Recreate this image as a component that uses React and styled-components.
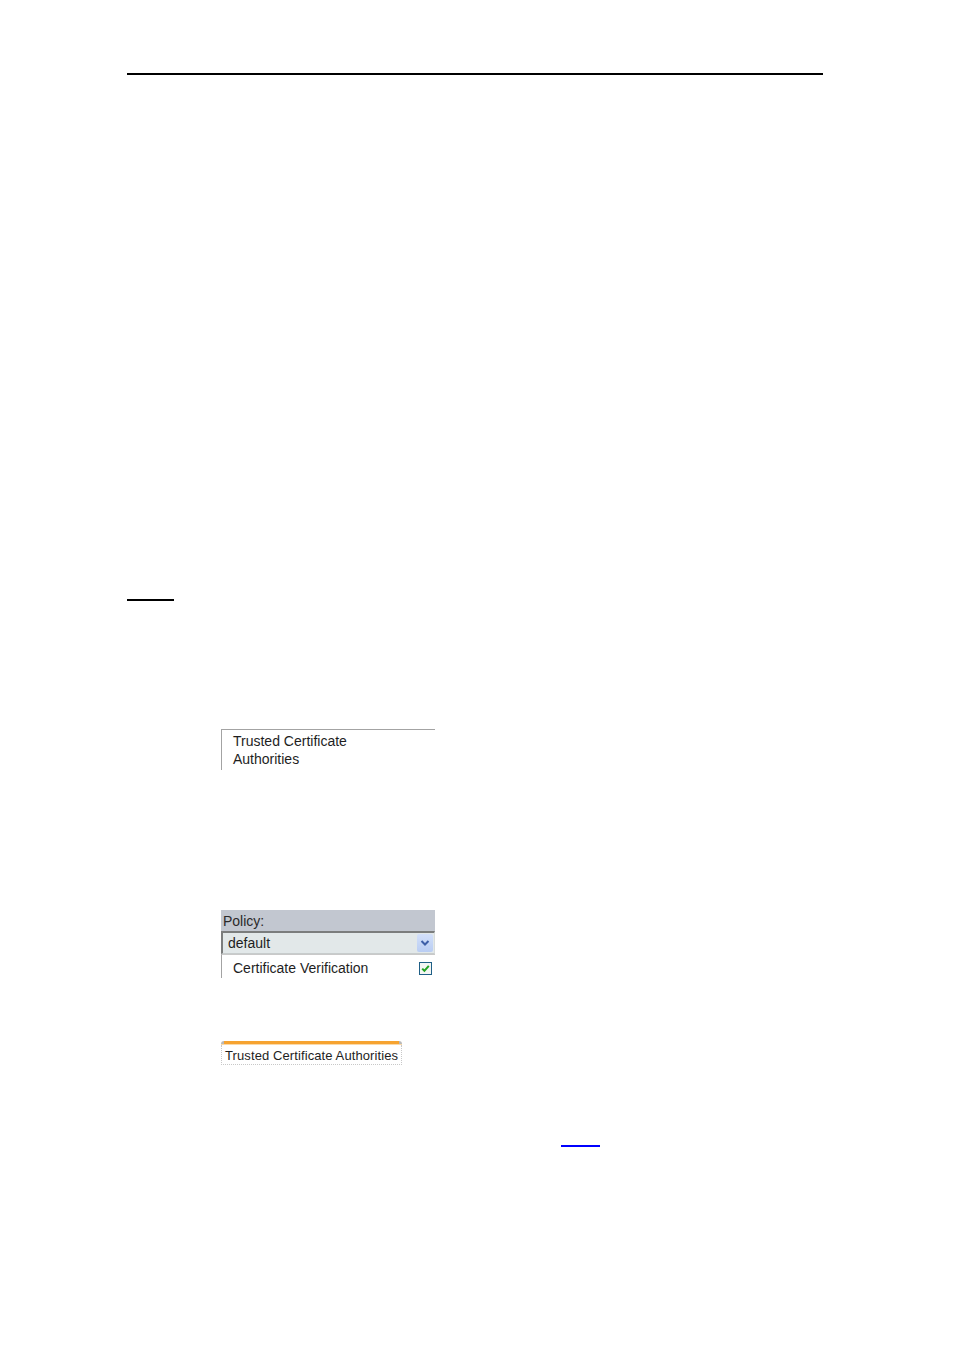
import React from 'react';
import styled, { createGlobalStyle } from 'styled-components';

const GlobalStyle = createGlobalStyle`
  html, body {
    margin: 0;
    padding: 0;
    background: #ffffff;
  }
  body {
    font-family: "Liberation Sans", Arial, sans-serif;
    color: #1a1a1a;
  }
`;

const Page = styled.div`
  width: 954px;
  min-height: 1350px;
  box-sizing: border-box;
  padding-top: 73px;
  display: flex;
  flex-direction: column;
  background: #ffffff;
`;

const Rule = styled.div`
  height: 2px;
  background: #000000;
  margin-left: 127px;
  width: ${({ width }) => width}px;
  margin-top: ${({ top }) => top || 0}px;
`;

const Figure = styled.div`
  margin-left: 221px;
  margin-top: ${({ top }) => top}px;
  display: flex;
  flex-direction: column;
`;

const NavCell = styled.div`
  width: 214px;
  height: 41px;
  box-sizing: border-box;
  border-top: 1px solid #a3a3a3;
  border-left: 1px solid #a3a3a3;
  padding: 2px 0 0 11px;
  font-size: 14px;
  line-height: 18px;
  color: #1e1e1e;
`;

const Panel = styled.div`
  width: 214px;
  display: flex;
  flex-direction: column;
`;

const PanelHeader = styled.div`
  height: 21px;
  background: #c2c7d0;
  padding-left: 2px;
  font-size: 14px;
  line-height: 22px;
  color: #2a2a2a;
`;

const Select = styled.div`
  height: 23px;
  box-sizing: border-box;
  background: #e2e8e9;
  border-top: 2px solid #7b7d7d;
  border-left: 2px solid #7b7d7d;
  border-right: 1px solid #d8dcdc;
  border-bottom: 1px solid #c7cccc;
  display: flex;
  align-items: center;
  justify-content: space-between;
  padding: 0 1px 0 5px;
  font-size: 14px;
  color: #1e1e1e;
`;

const DropButton = styled.div`
  width: 16px;
  height: 18px;
  border-radius: 2px;
  background: linear-gradient(#d3e0fa, #b9cdf3);
  display: flex;
  align-items: center;
  justify-content: center;
`;

const OptionRow = styled.div`
  height: 24px;
  box-sizing: border-box;
  border-left: 1px solid #a3a3a3;
  border-top: 1px solid #c9c9c9;
  display: flex;
  align-items: center;
  justify-content: space-between;
  padding: 3px 3px 0 11px;
  font-size: 14px;
  color: #1e1e1e;
`;

const CheckBox = styled.div`
  width: 13px;
  height: 13px;
  box-sizing: border-box;
  border: 1px solid #1f5f86;
  background: #f4f6f4;
  display: flex;
  align-items: center;
  justify-content: center;
`;

const Tab = styled.div`
  width: 181px;
  height: 24px;
  box-sizing: border-box;
  display: flex;
  flex-direction: column;
`;

const TabTop = styled.div`
  height: 4px;
  border-radius: 3px 3px 0 0;
  background: linear-gradient(to right, #b9b9b9 0, #b9b9b9 3px, #f6a330 3px, #f6a330 calc(100% - 3px), #b9b9b9 calc(100% - 3px));
  border-bottom: 1px solid #fbd9a8;
`;

const TabLabel = styled.div`
  flex: 1;
  border-left: 1px dotted #c8c8c8;
  border-right: 1px dotted #c8c8c8;
  border-bottom: 1px dotted #c8c8c8;
  padding: 2px 0 0 3px;
  font-size: 13px;
  letter-spacing: 0.1px;
  line-height: 17px;
  color: #1e1e1e;
  white-space: nowrap;
`;

const LinkMark = styled.a`
  display: block;
  width: 39px;
  height: 2px;
  margin-left: 561px;
  margin-top: 80px;
  background: #0000ff;
`;

const Chevron = () => (
  <svg width="10" height="8" viewBox="0 0 10 8">
    <path d="M1.5 2 L5 5.5 L8.5 2" fill="none" stroke="#3d5fa8" strokeWidth="2" />
  </svg>
);

const Tick = () => (
  <svg width="9" height="9" viewBox="0 0 9 9">
    <path d="M1.2 4.6 L3.4 6.8 L7.8 1.8" fill="none" stroke="#21a321" strokeWidth="2" />
  </svg>
);

export default function App() {
  return (
    <>
      <GlobalStyle />
      <Page>
        <Rule width={696} />
        <Rule width={47} top={524} />

        <Figure top={128}>
          <NavCell>
            Trusted Certificate
            <br />
            Authorities
          </NavCell>
        </Figure>

        <Figure top={140}>
          <Panel>
            <PanelHeader>Policy:</PanelHeader>
            <Select>
              default
              <DropButton>
                <Chevron />
              </DropButton>
            </Select>
            <OptionRow>
              Certificate Verification
              <CheckBox>
                <Tick />
              </CheckBox>
            </OptionRow>
          </Panel>
        </Figure>

        <Figure top={63}>
          <Tab>
            <TabTop />
            <TabLabel>Trusted Certificate Authorities</TabLabel>
          </Tab>
        </Figure>

        <LinkMark href="#" aria-label="link" />
      </Page>
    </>
  );
}
